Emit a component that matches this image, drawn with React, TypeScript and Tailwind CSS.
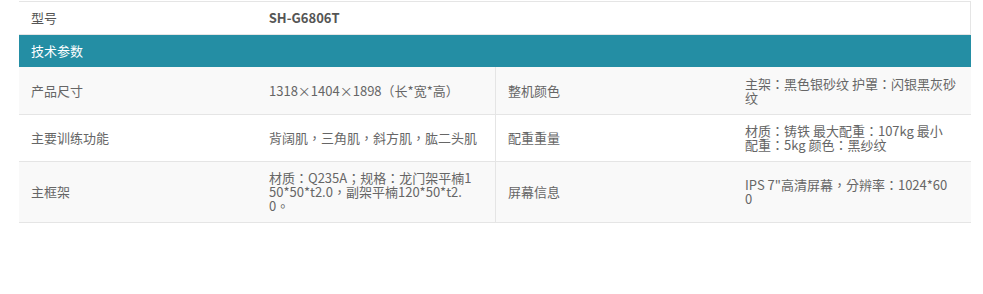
import React from "react";

const font = { fontFamily: '"Noto Sans CJK TC", "Noto Sans CJK SC", "Noto Sans", sans-serif' };

function Cell({ children, border = false }: { children: React.ReactNode; border?: boolean }) {
  return (
    <div
      className={
        "flex items-center px-3 text-[13px] leading-[14px] text-[#666] whitespace-nowrap" +
        (border ? " border-l border-[#e5e5e5]" : "")
      }
    >
      <div>{children}</div>
    </div>
  );
}

export default function App() {
  return (
    <div className="w-[983px] h-[294px] bg-white pt-px" style={font}>
      <div className="ml-[19px] w-[952px]">
        <div className="grid grid-cols-4 h-[34px] border-t border-r border-b border-[#e5e5e5] bg-white">
          <div className="flex items-center px-3 text-[13px] text-[#555]">型号</div>
          <div className="flex items-center px-3 text-[13px] font-bold text-[#555]">SH-G6806T</div>
          <div />
          <div />
        </div>
        <div className="flex items-center h-[32px] px-3 bg-[#248ea4] text-[13px] text-white">技术参数</div>
        <div className="grid grid-cols-4 h-[48px] border-b border-[#e5e5e5] bg-[#f9f9f9]">
          <Cell>产品尺寸</Cell>
          <Cell>1318×1404×1898（长*宽*高）</Cell>
          <Cell border>整机颜色</Cell>
          <Cell>
            主架：黑色银砂纹 护罩：闪银黑灰砂
            <br />纹
          </Cell>
        </div>
        <div className="grid grid-cols-4 h-[47px] border-b border-[#e5e5e5] bg-white">
          <Cell>主要训练功能</Cell>
          <Cell>背阔肌，三角肌，斜方肌，肱二头肌</Cell>
          <Cell border>配重重量</Cell>
          <Cell>
            材质：铸铁 最大配重：107kg 最小
            <br />配重：5kg 颜色：黑纱纹
          </Cell>
        </div>
        <div className="grid grid-cols-4 h-[61px] border-b border-[#e5e5e5] bg-[#f9f9f9]">
          <Cell>主框架</Cell>
          <Cell>
            材质：Q235A；规格：龙门架平楠1
            <br />50*50*t2.0，副架平楠120*50*t2.
            <br />0。
          </Cell>
          <Cell border>屏幕信息</Cell>
          <Cell>
            IPS 7"高清屏幕，分辨率：1024*60
            <br />0
          </Cell>
        </div>
      </div>
    </div>
  );
}
